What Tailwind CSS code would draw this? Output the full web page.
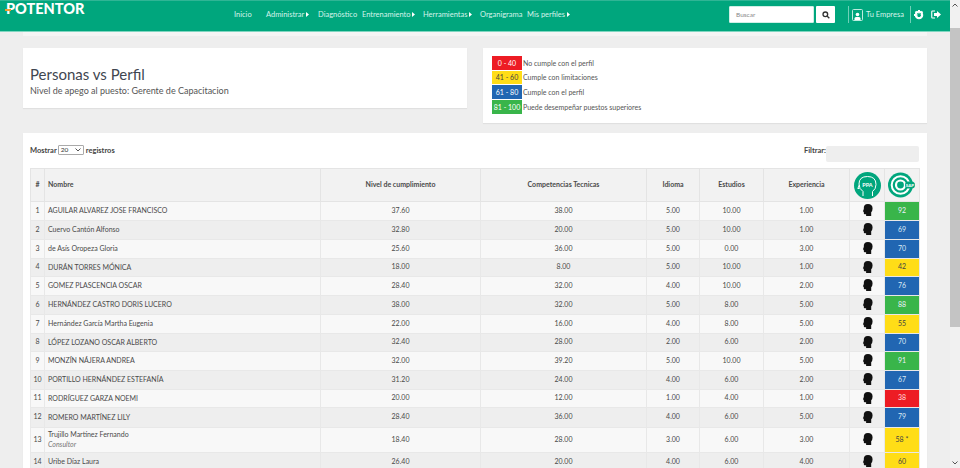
<!DOCTYPE html>
<html lang="es">
<head>
    <meta charset="UTF-8">
    <title>Personas vs Perfil</title>
    <script src="https://cdn.jsdelivr.net/npm/@tailwindcss/browser@4"></script>
</head>
<body class="bg-[#eeeeee] h-[468px] overflow-hidden flex font-['Lato',sans-serif] text-[#444]">
    <div class="w-[950px] h-[468px] overflow-hidden shrink-0">
        <!-- Top bar -->
        <header class="h-[32px] pb-[3px] bg-[#00a67d] border-t border-t-[#2fb595] border-b border-b-[#7fd6c0] flex items-center text-[7.5px] text-[#d5f3ea]">
            <div class="w-[218px] pl-[6px] self-start pt-[1px] text-[14.5px] leading-[13px] font-black text-white relative whitespace-nowrap">
                <span class="absolute left-[5px] top-[8px] w-[6px] h-[2px] bg-[#f39a2d]"></span>POTENTOR
            </div>
            <nav class="flex items-center whitespace-nowrap">
                <a class="w-[48px] pl-[16px]">Inicio</a>
                <a class="w-[52px] flex items-center gap-[2px]">Administrar <svg width="3" height="5" viewBox="0 0 3 5"><path fill="#fff" d="M0 0L3 2.500L0 5Z"/></svg></a>
                <a class="w-[44px]">Diagnóstico</a>
                <a class="w-[61px] flex items-center gap-[2px]">Entrenamiento <svg width="3" height="5" viewBox="0 0 3 5"><path fill="#fff" d="M0 0L3 2.500L0 5Z"/></svg></a>
                <a class="w-[57px] flex items-center gap-[2px]">Herramientas <svg width="3" height="5" viewBox="0 0 3 5"><path fill="#fff" d="M0 0L3 2.500L0 5Z"/></svg></a>
                <a class="w-[47px]">Organigrama</a>
                <a class="flex items-center gap-[2px]">Mis perfiles <svg width="3" height="5" viewBox="0 0 3 5"><path fill="#fff" d="M0 0L3 2.500L0 5Z"/></svg></a>
            </nav>
            <div class="ml-auto flex items-center pr-[9px]">
                <div class="w-[85px] h-[17px] bg-white border border-[#cfeee5] rounded-[1px] pl-[6px] flex items-center text-[6.5px] text-[#888]">Buscar</div>
                <div class="w-[19px] h-[17px] bg-white ml-[2px] rounded-[1px] flex items-center justify-center">
                    <svg width="8" height="8" viewBox="0 0 12 12" fill="none" stroke="#333" stroke-width="2"><circle cx="5" cy="5" r="3.500"/><path d="M7.500 7.500L11 11"/></svg>
                </div>
                <div class="w-px h-[17px] bg-[#6fd0b8] ml-[13px]"></div>
                <svg class="ml-[3px]" width="11" height="12" viewBox="0 0 11 12"><rect x="0.500" y="0.500" width="10" height="11" rx="1" fill="none" stroke="#bdebdf"/><circle cx="5.500" cy="5.500" r="1.800" fill="#fff"/><path d="M2.500 11V9.500Q2.500 8 4 8H7Q8.500 8 8.500 9.500V11Z" fill="#fff"/></svg>
                <span class="ml-[3px] w-[44px] text-[7.500px] whitespace-nowrap">Tu Empresa</span>
                <div class="w-px h-[17px] bg-[#6fd0b8]"></div>
                <svg class="ml-[3px]" width="10" height="10" viewBox="0 0 20 20"><circle cx="10" cy="10" r="6.500" fill="none" stroke="#fff" stroke-width="4"/><path stroke="#fff" stroke-width="4" stroke-dasharray="3.500 3.500" d="M10 0V20M0 10H20M3 3L17 17M17 3L3 17"/><circle cx="10" cy="10" r="2.800" fill="#00a67d"/></svg>
                <svg class="ml-[7px]" width="10" height="9" viewBox="0 0 20 18"><path fill="none" stroke="#fff" stroke-width="2.200" d="M8 2H3Q1.500 2 1.500 3.500v11Q1.500 16 3 16h5"/><path fill="#fff" d="M6 6h6V2l8 7-8 7v-4H6z"/></svg>
            </div>
        </header>

        <main class="px-[23px]">
            <div class="h-[4px] bg-[#f5f5f5]"></div>

            <div class="flex gap-[16px] items-start mt-[12px]">
                <section class="w-[444px] h-[60px] bg-white shadow-[0_1px_1px_rgba(0,0,0,0.06)] pl-[7px] pt-[16px]">
                    <h1 class="text-[15px] leading-[20px] mb-[1px] text-[#3f4650]">Personas vs Perfil</h1>
                    <p class="text-[9px] leading-[12px] text-[#555]">Nivel de apego al puesto: Gerente de Capacitacion</p>
                </section>
                <section class="flex-1 h-[75px] bg-white shadow-[0_1px_1px_rgba(0,0,0,0.06)] pl-[9px] pt-[8px] text-[7px] text-[#555] whitespace-nowrap">
                    <div class="flex items-center h-[13.500px] mb-[1.200px]"><span class="w-[30px] h-full flex items-center justify-center bg-[#ed1c24] text-white">0 - 40</span><span class="ml-[1px]">No cumple con el perfil</span></div>
                    <div class="flex items-center h-[13.500px] mb-[1.200px]"><span class="w-[30px] h-full flex items-center justify-center bg-[#ffdd17] text-[#444]">41 - 60</span><span class="ml-[1px]">Cumple con limitaciones</span></div>
                    <div class="flex items-center h-[13.500px] mb-[1.200px]"><span class="w-[30px] h-full flex items-center justify-center bg-[#2166b2] text-white">61 - 80</span><span class="ml-[1px]">Cumple con el perfil</span></div>
                    <div class="flex items-center h-[13.500px]"><span class="w-[30px] h-full flex items-center justify-center bg-[#39b54a] text-white">81 - 100</span><span class="ml-[1px]">Puede desempeñar puestos superiores</span></div>
                </section>
            </div>

            <section class="mt-[10px] bg-white px-[7px] pt-[12px] pb-[20px] shadow-[0_1px_1px_rgba(0,0,0,0.06)]">
                <div class="flex items-start h-[23px] text-[7.500px] font-bold text-[#444]">
                    <span>Mostrar</span>
                    <span class="mx-[1px] w-[26px] h-[10px] border border-[#aaa] rounded-[1px] bg-white flex items-center justify-between px-[2px] font-normal text-[6.500px] text-[#333]">20<svg width="6" height="4" viewBox="0 0 6 4" fill="none" stroke="#555"><path d="M0.500 0.500L3 3L5.500 0.500"/></svg></span>
                    <span class="ml-[1px]">registros</span>
                    <span class="ml-auto">Filtrar:</span>
                    <span class="w-[93px] h-[16px] mt-[1px] mr-[1px] bg-[#eeeeee] rounded-[2px]"></span>
                </div>

                <table class="w-[889px] table-fixed border-collapse text-[7px] text-[#4a4a4a]">
                    <colgroup>
                        <col class="w-[14px]"><col class="w-[276px]"><col class="w-[160px]"><col class="w-[166px]"><col class="w-[53px]"><col class="w-[64px]"><col class="w-[86px]"><col class="w-[35px]"><col class="w-[35px]">
                    </colgroup>
                    <thead>
                        <tr class="h-[33px] bg-[#f2f2f2]">
                            <th class="border border-[#e4e4e4] text-center p-0 pb-[2px]">#</th>
                            <th class="border border-[#e4e4e4] text-left pl-[3px] pb-[2px]">Nombre</th>
                            <th class="border border-[#e4e4e4] pb-[2px]">Nivel de cumplimiento</th>
                            <th class="border border-[#e4e4e4] pb-[2px]">Competencias Tecnicas</th>
                            <th class="border border-[#e4e4e4] pb-[2px]">Idioma</th>
                            <th class="border border-[#e4e4e4] pb-[2px]">Estudios</th>
                            <th class="border border-[#e4e4e4] pb-[2px]">Experiencia</th>
                            <th class="border border-[#e4e4e4] p-0">
                                <svg class="mx-auto" width="27" height="27" viewBox="0 0 27 27"><circle cx="13.500" cy="13.500" r="13.500" fill="#00a67d"/><path fill="none" stroke="#fff" stroke-width="1" d="M9 24v-4.500Q5 17 5 12 5 4.500 13.500 4.500 22 4.500 22 12.500 22 17 18.500 19.500V24M5.300 13 3.800 16.500H5.500"/><text x="13.500" y="14.500" text-anchor="middle" font-size="5.500" font-weight="700" fill="#fff">PPA</text></svg>
                            </th>
                            <th class="border border-[#e4e4e4] p-0">
                                <svg class="mx-auto" width="28" height="26" viewBox="0 0 28 26"><circle cx="12.500" cy="13" r="12.500" fill="#00a67d"/><circle cx="12.500" cy="13" r="8.800" fill="none" stroke="#fff" stroke-width="2"/><circle cx="12.500" cy="13" r="4.500" fill="none" stroke="#fff" stroke-width="2.200"/><rect x="17" y="9.500" width="10" height="7" rx="3.500" fill="#00a67d"/><text x="22" y="14.700" text-anchor="middle" font-size="4.500" font-weight="700" fill="#fff">SAP</text></svg>
                            </th>
                        </tr>
                    </thead>
                    <tbody id="rows"></tbody>
                </table>
            </section>
        </main>
    </div>
    <!-- Scrollbar -->
    <div class="w-[10px] h-[468px] bg-[#f1f1f1] flex flex-col items-center">
        <svg class="mt-[3px]" width="6" height="4" viewBox="0 0 6 4" fill="none" stroke="#555"><path d="M0.500 3.500L3 1L5.500 3.500"/></svg>
        <div class="w-full h-[299px] mt-[21px] bg-[#c4c4c4]"></div>
        <svg class="mt-auto mb-[3px]" width="6" height="4" viewBox="0 0 6 4" fill="none" stroke="#555"><path d="M0.500 0.500L3 3L5.500 0.500"/></svg>
    </div>

    <script>
        const green = 'bg-[#39b54a] text-[#eef]';
        const blue = 'bg-[#2166b2] text-[#dde8f5]';
        const yellow = 'bg-[#ffdd17] text-[#444]';
        const red = 'bg-[#ed1c24] text-[#fdd]';

        // alto de fila, nombre, puesto, valores, puntaje, color
        const people = [
            ['h-[19px]', 'AGUILAR ALVAREZ JOSE FRANCISCO', '', '37.60', '38.00', '5.00', '10.00', '1.00', '92', green],
            ['h-[19px]', 'Cuervo Cantón Alfonso', '', '32.80', '20.00', '5.00', '10.00', '1.00', '69', blue],
            ['h-[19px]', 'de Asís Oropeza Gloria', '', '25.60', '36.00', '5.00', '0.00', '3.00', '70', blue],
            ['h-[18px]', 'DURÁN TORRES MÓNICA', '', '18.00', '8.00', '5.00', '10.00', '1.00', '42', yellow],
            ['h-[19px]', 'GOMEZ PLASCENCIA OSCAR', '', '28.40', '32.00', '4.00', '10.00', '2.00', '76', blue],
            ['h-[19px]', 'HERNÁNDEZ CASTRO DORIS LUCERO', '', '38.00', '32.00', '5.00', '8.00', '5.00', '88', green],
            ['h-[19px]', 'Hernández García Martha Eugenia', '', '22.00', '16.00', '4.00', '8.00', '5.00', '55', yellow],
            ['h-[18px]', 'LÓPEZ LOZANO OSCAR ALBERTO', '', '32.40', '28.00', '2.00', '6.00', '2.00', '70', blue],
            ['h-[19px]', 'MONZÍN NÁJERA ANDREA', '', '32.00', '39.20', '5.00', '10.00', '5.00', '91', green],
            ['h-[19px]', 'PORTILLO HERNÁNDEZ ESTEFANÍA', '', '31.20', '24.00', '4.00', '6.00', '2.00', '67', blue],
            ['h-[18px]', 'RODRÍGUEZ GARZA NOEMI', '', '20.00', '12.00', '1.00', '4.00', '1.00', '38', red],
            ['h-[20px]', 'ROMERO MARTÍNEZ LILY', '', '28.40', '36.00', '4.00', '6.00', '5.00', '79', blue],
            ['h-[25px]', 'Trujillo Martínez Fernando', 'Consultor', '18.40', '28.00', '3.00', '6.00', '3.00', '58 *', yellow],
            ['h-[19px]', 'Uribe Díaz Laura', '', '26.40', '20.00', '4.00', '6.00', '4.00', '60', yellow]
        ];

        const head = '<svg class="mx-auto" width="11" height="12" viewBox="0 0 11 13"><path fill="#111" d="M6 0Q11 0 11 5 11 7.500 9.500 9V13H4V11H2.500Q1.500 11 1.500 10V8.500L0.500 8 1.500 5.500Q1 0 6 0Z"/></svg>';
        const td = 'border border-[#e8e8e8] p-0 pb-[2px] text-center';

        document.getElementById('rows').innerHTML = people.map((p, i) => {
            const stripe = i % 2 ? 'bg-[#eeeeee]' : 'bg-[#f8f8f8]';
            const job = p[2] ? `<br><i class="italic text-[#777]">${p[2]}</i>` : '';
            const nums = p.slice(3, 8).map(n => `<td class="${td}">${n}</td>`).join('');
            return `<tr class="${p[0]} ${stripe}"><td class="${td}">${i + 1}</td>` +
                `<td class="border border-[#e8e8e8] p-0 pb-[2px] pl-[3px] leading-[10px]">${p[1]}${job}</td>${nums}` +
                `<td class="${td}">${head}</td><td class="${td} ${p[9]}">${p[8]}</td></tr>`;
        }).join('');
    </script>
</body>
</html>
